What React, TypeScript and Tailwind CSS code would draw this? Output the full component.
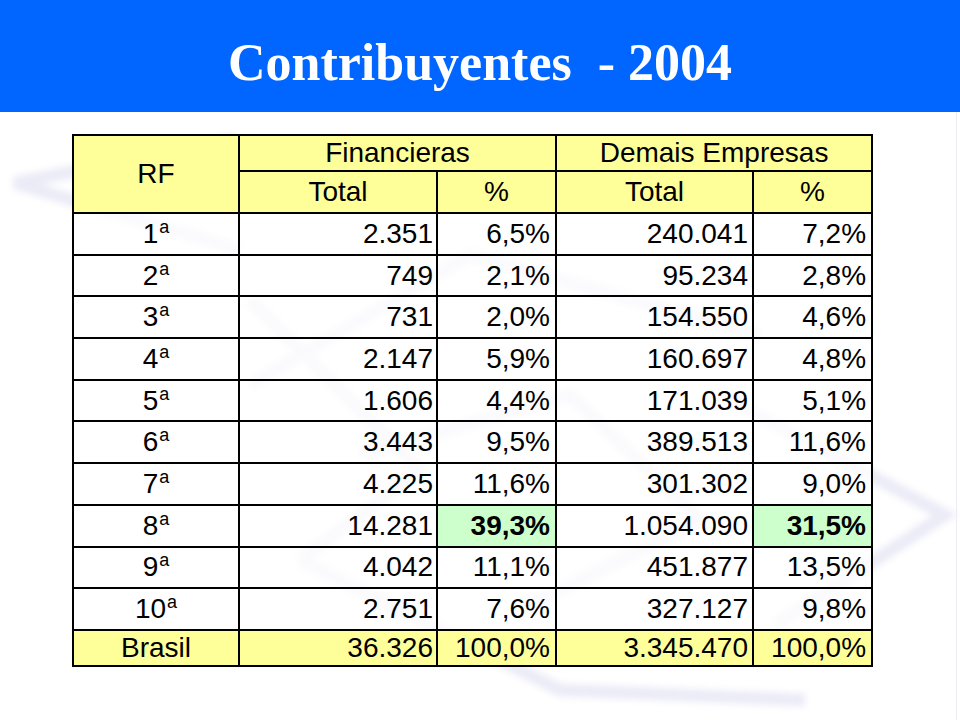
import React from 'react'

type Row = { rf: string; ord: string; fTot: string; fPct: string; dTot: string; dPct: string; hl?: boolean }

const ROWS: Row[] = [
  { rf: '1', ord: 'a', fTot: '2.351', fPct: '6,5%', dTot: '240.041', dPct: '7,2%' },
  { rf: '2', ord: 'a', fTot: '749', fPct: '2,1%', dTot: '95.234', dPct: '2,8%' },
  { rf: '3', ord: 'a', fTot: '731', fPct: '2,0%', dTot: '154.550', dPct: '4,6%' },
  { rf: '4', ord: 'a', fTot: '2.147', fPct: '5,9%', dTot: '160.697', dPct: '4,8%' },
  { rf: '5', ord: 'a', fTot: '1.606', fPct: '4,4%', dTot: '171.039', dPct: '5,1%' },
  { rf: '6', ord: 'a', fTot: '3.443', fPct: '9,5%', dTot: '389.513', dPct: '11,6%' },
  { rf: '7', ord: 'a', fTot: '4.225', fPct: '11,6%', dTot: '301.302', dPct: '9,0%' },
  { rf: '8', ord: 'a', fTot: '14.281', fPct: '39,3%', dTot: '1.054.090', dPct: '31,5%', hl: true },
  { rf: '9', ord: 'a', fTot: '4.042', fPct: '11,1%', dTot: '451.877', dPct: '13,5%' },
  { rf: '10', ord: 'a', fTot: '2.751', fPct: '7,6%', dTot: '327.127', dPct: '9,8%' },
]

// marca d'agua (logo apagado ao fundo)
function Watermark() {
  return (
    <svg className="absolute inset-0 pointer-events-none" width="960" height="720" viewBox="0 0 960 720">
      <defs>
        <filter id="soft" x="-10%" y="-10%" width="120%" height="120%">
          <feGaussianBlur stdDeviation="3" />
        </filter>
      </defs>
      <g fill="none" stroke="#d4d4ee" strokeWidth="13" strokeLinejoin="miter" opacity="0.45" filter="url(#soft)">
        <polyline points="235,140 15,183 240,250" />
        <polyline points="250,385 470,255 760,335" />
        <polyline points="720,395 945,515 775,625" />
        <polyline points="300,560 560,690 805,700" />
        <polyline points="360,455 570,395 700,520 520,610" />
        <polyline points="250,300 420,470 300,560" />
      </g>
    </svg>
  )
}

const cellB = 'border-2 border-black'

export default function App() {
  return (
    <div className="relative w-[960px] h-[720px] bg-white overflow-hidden" style={{ fontFamily: '"Liberation Sans", Arial, sans-serif' }}>
      <Watermark />
      <div className="absolute top-[112px] bottom-0 left-[956px] w-px bg-[#ececf2]" />

      <div className="relative h-[112px] bg-[#0066ff] flex items-center justify-center">
        <h1 className="text-white font-bold text-[52px] leading-none whitespace-pre pt-[14px]"
          style={{ fontFamily: '"Liberation Serif", "Times New Roman", serif' }}>
          {'Contribuyentes  - 2004'}
        </h1>
      </div>

      <div className="relative mt-[22px] ml-[72px]">
        <table className="border-collapse text-[28px] text-black leading-none w-[799px] table-fixed">
          <colgroup>
            <col className="w-[166px]" />
            <col className="w-[198px]" />
            <col className="w-[119px]" />
            <col className="w-[197px]" />
            <col className="w-[119px]" />
          </colgroup>
          <thead>
            <tr className="h-[36px] bg-[#ffff99]">
              <th rowSpan={2} className={`${cellB} font-normal text-center`}>RF</th>
              <th colSpan={2} className={`${cellB} font-normal text-center`}>Financieras</th>
              <th colSpan={2} className={`${cellB} font-normal text-center`}>Demais Empresas</th>
            </tr>
            <tr className="h-[42px] bg-[#ffff99]">
              <th className={`${cellB} font-normal text-center`}>Total</th>
              <th className={`${cellB} font-normal text-center`}>%</th>
              <th className={`${cellB} font-normal text-center`}>Total</th>
              <th className={`${cellB} font-normal text-center`}>%</th>
            </tr>
          </thead>
          <tbody>
            {ROWS.map(r => (
              <tr key={r.rf} className="h-[41.7px]">
                <td className={`${cellB} bg-white/75 text-center`}>
                  {r.rf}<span className="relative -top-[10px] text-[18px] ml-[1px]">{r.ord}</span>
                </td>
                <td className={`${cellB} bg-white/75 text-right pr-[3px]`}>{r.fTot}</td>
                <td className={`${cellB} text-right pr-[5px] ${r.hl ? 'bg-[#ccffcc] font-bold' : 'bg-white/75'}`}>{r.fPct}</td>
                <td className={`${cellB} bg-white/75 text-right pr-[4px]`}>{r.dTot}</td>
                <td className={`${cellB} text-right pr-[5px] ${r.hl ? 'bg-[#ccffcc] font-bold' : 'bg-white/75'}`}>{r.dPct}</td>
              </tr>
            ))}
            <tr className="h-[36px] bg-[#ffff99]">
              <td className={`${cellB} text-center`}>Brasil</td>
              <td className={`${cellB} text-right pr-[3px]`}>36.326</td>
              <td className={`${cellB} text-right pr-[5px]`}>100,0%</td>
              <td className={`${cellB} text-right pr-[4px]`}>3.345.470</td>
              <td className={`${cellB} text-right pr-[5px]`}>100,0%</td>
            </tr>
          </tbody>
        </table>
      </div>
    </div>
  )
}
